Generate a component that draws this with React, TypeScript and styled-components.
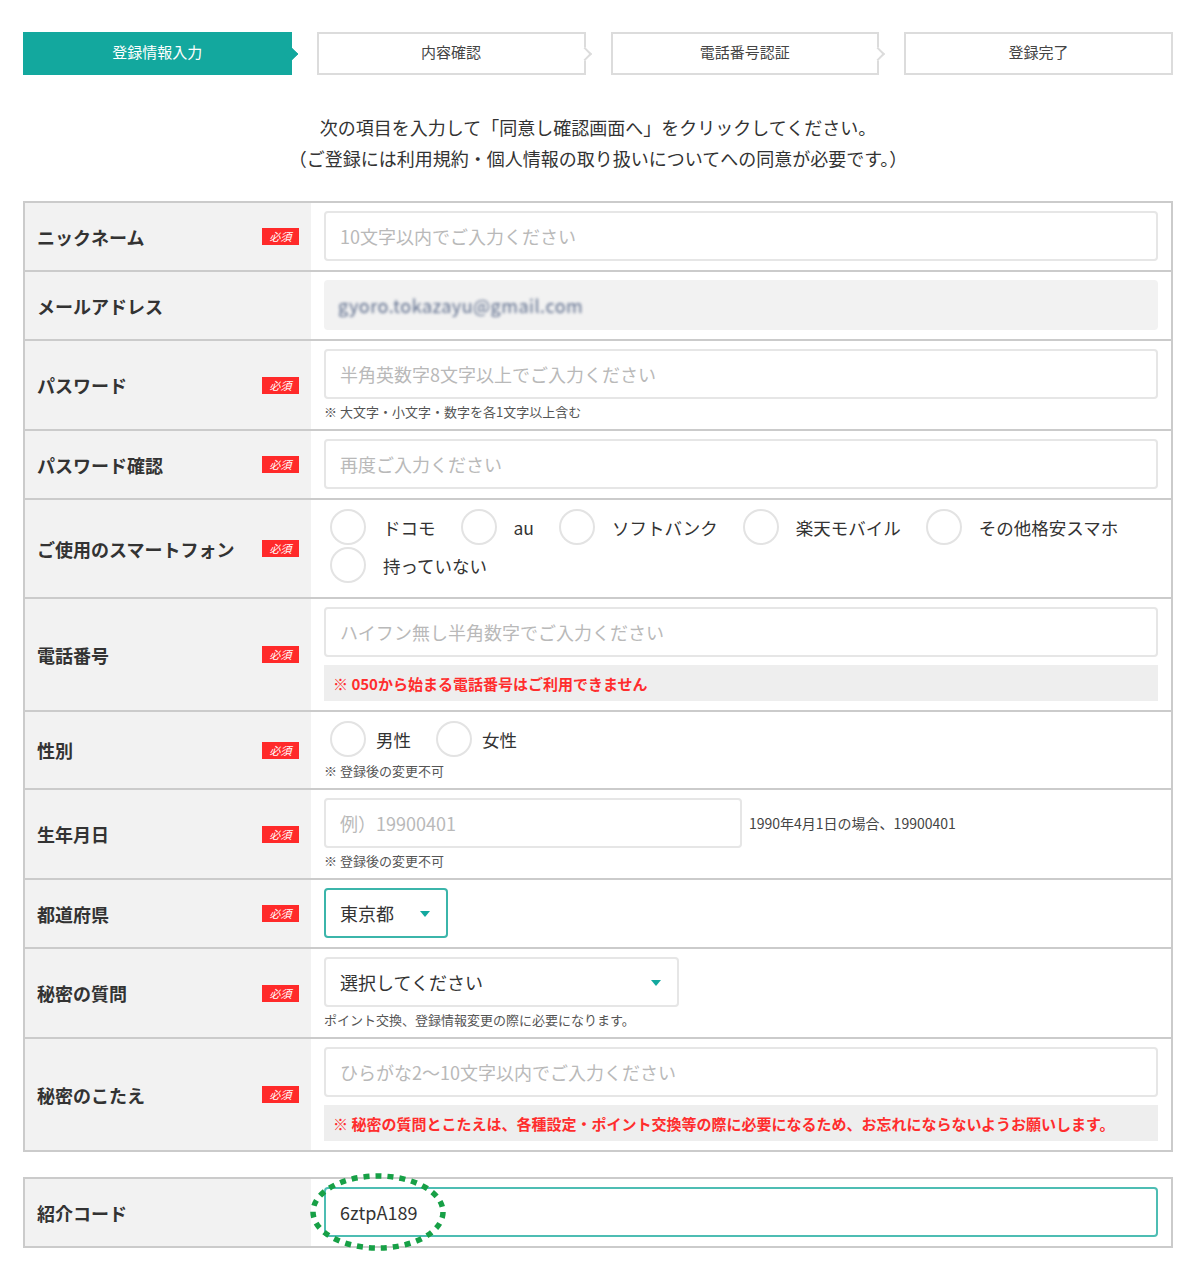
import React from 'react';
import styled, { createGlobalStyle, css } from 'styled-components';

const GlobalStyle = createGlobalStyle`
  html, body {
    margin: 0;
    padding: 0;
    background: #fff;
  }
  body {
    font-family: "Noto Sans CJK JP", "Noto Sans", sans-serif;
    color: #333;
  }
`;

const TEAL = '#13a89e';

type Field =
  | { kind: 'input'; placeholder?: string; note?: string; alert?: string; width?: number; side?: string }
  | { kind: 'email'; value: string }
  | { kind: 'radio'; options: string[][]; gap: number; note?: string }
  | { kind: 'select'; value: string; width: number; active?: boolean; note?: string };

type Row = { label: string; required: boolean; field: Field };

const rows: Row[] = [
  { label: 'ニックネーム', required: true, field: { kind: 'input', placeholder: '10文字以内でご入力ください' } },
  { label: 'メールアドレス', required: false, field: { kind: 'email', value: 'gyoro.tokazayu@gmail.com' } },
  {
    label: 'パスワード',
    required: true,
    field: { kind: 'input', placeholder: '半角英数字8文字以上でご入力ください', note: '※ 大文字・小文字・数字を各1文字以上含む' },
  },
  { label: 'パスワード確認', required: true, field: { kind: 'input', placeholder: '再度ご入力ください' } },
  {
    label: 'ご使用のスマートフォン',
    required: true,
    field: {
      kind: 'radio',
      gap: 17,
      options: [['ドコモ', 'au', 'ソフトバンク', '楽天モバイル', 'その他格安スマホ'], ['持っていない']],
    },
  },
  {
    label: '電話番号',
    required: true,
    field: {
      kind: 'input',
      placeholder: 'ハイフン無し半角数字でご入力ください',
      alert: '※ 050から始まる電話番号はご利用できません',
    },
  },
  { label: '性別', required: true, field: { kind: 'radio', gap: 10, options: [['男性', '女性']], note: '※ 登録後の変更不可' } },
  {
    label: '生年月日',
    required: true,
    field: {
      kind: 'input',
      placeholder: '例）19900401',
      width: 418,
      side: '1990年4月1日の場合、19900401',
      note: '※ 登録後の変更不可',
    },
  },
  { label: '都道府県', required: true, field: { kind: 'select', value: '東京都', width: 124, active: true } },
  {
    label: '秘密の質問',
    required: true,
    field: { kind: 'select', value: '選択してください', width: 355, note: 'ポイント交換、登録情報変更の際に必要になります。' },
  },
  {
    label: '秘密のこたえ',
    required: true,
    field: {
      kind: 'input',
      placeholder: 'ひらがな2〜10文字以内でご入力ください',
      alert: '※ 秘密の質問とこたえは、各種設定・ポイント交換等の際に必要になるため、お忘れにならないようお願いします。',
    },
  },
];

const steps = ['登録情報入力', '内容確認', '電話番号認証', '登録完了'];

const App: React.FC = () => {
  return (
    <>
      <GlobalStyle />
      <Page>
        <Steps>
          {steps.map((s, i) => (
            <Step key={s} active={i === 0} last={i === steps.length - 1}>
              {s}
            </Step>
          ))}
        </Steps>

        <Intro>
          次の項目を入力して「同意し確認画面へ」をクリックしてください。
          <br />
          （ご登録には利用規約・個人情報の取り扱いについてへの同意が必要です。）
        </Intro>

        <Table>
          {rows.map((row) => (
            <FormRow key={row.label}>
              <LabelCell>
                <LabelText>{row.label}</LabelText>
                {row.required && <Badge>必須</Badge>}
              </LabelCell>
              <FieldCell>{renderField(row.field)}</FieldCell>
            </FormRow>
          ))}
        </Table>

        <Table spaced>
          <FormRow>
            <LabelCell>
              <LabelText>紹介コード</LabelText>
            </LabelCell>
            <FieldCell>
              <InputLine>
                <TextBox focused>
                  <ValueText>6ztpA189</ValueText>
                </TextBox>
              </InputLine>
              <Marker width="142" height="84" viewBox="0 0 142 84">
                <ellipse
                  cx="71"
                  cy="42"
                  rx="65"
                  ry="36"
                  fill="none"
                  stroke="#17a046"
                  strokeWidth="5.5"
                  strokeDasharray="6 6"
                />
              </Marker>
            </FieldCell>
          </FormRow>
        </Table>
      </Page>
    </>
  );
};

const renderField = (f: Field) => {
  if (f.kind === 'input') {
    return (
      <>
        <InputLine>
          <TextBox width={f.width}>
            <Placeholder>{f.placeholder}</Placeholder>
          </TextBox>
          {f.side && <SideText>{f.side}</SideText>}
        </InputLine>
        {f.note && <Note>{f.note}</Note>}
        {f.alert && <Alert>{f.alert}</Alert>}
      </>
    );
  }
  if (f.kind === 'email') {
    return (
      <EmailBox>
        <Blurred>{f.value}</Blurred>
      </EmailBox>
    );
  }
  if (f.kind === 'radio') {
    return (
      <>
        <RadioGroup>
          {f.options.map((line, i) => (
            <RadioLine key={i}>
              {line.map((o) => (
                <RadioItem key={o}>
                  <RadioCircle />
                  <RadioText gap={f.gap}>{o}</RadioText>
                </RadioItem>
              ))}
            </RadioLine>
          ))}
        </RadioGroup>
        {f.note && <Note flush>{f.note}</Note>}
      </>
    );
  }
  return (
    <>
      <SelectBox active={f.active} width={f.width}>
        <ValueText>{f.value}</ValueText>
        <Caret />
      </SelectBox>
      {f.note && <Note>{f.note}</Note>}
    </>
  );
};

export default App;

const Page = styled.div`
  width: 1150px;
  padding: 32px 0 40px 23px;
`;

const Steps = styled.div`
  display: grid;
  grid-template-columns: repeat(4, 1fr);
  column-gap: 25px;
`;

const Step = styled.div<{ active?: boolean; last?: boolean }>`
  position: relative;
  height: 43px;
  display: flex;
  align-items: center;
  justify-content: center;
  padding-bottom: 4px;
  font-size: 15px;
  box-sizing: border-box;
  color: ${(p) => (p.active ? '#fff' : '#444')};
  background: ${(p) => (p.active ? TEAL : '#fff')};
  border: 2px solid ${(p) => (p.active ? TEAL : '#dcdcdc')};

  ${(p) =>
    !p.last &&
    css`
      &::after {
        content: '';
        position: absolute;
        top: 50%;
        right: -6px;
        width: 8px;
        height: 8px;
        margin-top: -5px;
        background: ${p.active ? TEAL : '#fff'};
        border-top: 2px solid ${p.active ? TEAL : '#dcdcdc'};
        border-right: 2px solid ${p.active ? TEAL : '#dcdcdc'};
        transform: rotate(45deg);
      }
    `}
`;

const Intro = styled.p`
  margin: 37px 0 27px;
  text-align: center;
  font-size: 18px;
  line-height: 31px;
  color: #333;
`;

const Table = styled.div<{ spaced?: boolean }>`
  border: 2px solid #cbcbcb;
  margin-top: ${(p) => (p.spaced ? '25px' : '0')};
`;

const FormRow = styled.div`
  display: grid;
  grid-template-columns: 286px 1fr;
  & + & {
    border-top: 2px solid #cbcbcb;
  }
`;

const LabelCell = styled.div`
  background: #f2f2f2;
  display: flex;
  align-items: center;
  justify-content: space-between;
  padding: 0 12px 0 12px;
`;

const LabelText = styled.span`
  font-size: 18px;
  font-weight: 700;
  color: #333;
`;

const Badge = styled.span`
  width: 37px;
  height: 17px;
  background: #ff2a2a;
  color: #fff;
  font-size: 11px;
  font-style: italic;
  line-height: 17px;
  text-align: center;
`;

const FieldCell = styled.div`
  position: relative;
  padding: 8px 13px 9px 13px;
  display: flex;
  flex-direction: column;
  justify-content: center;
`;

const InputLine = styled.div`
  display: flex;
  align-items: center;
`;

const TextBox = styled.div<{ focused?: boolean; width?: number }>`
  flex: ${(p) => (p.width ? 'none' : '1')};
  width: ${(p) => (p.width ? `${p.width}px` : 'auto')};
  box-sizing: border-box;
  height: 50px;
  display: flex;
  align-items: center;
  padding: 0 14px;
  background: #fff;
  border: 2px solid ${(p) => (p.focused ? '#4dbdb3' : '#e6e6e6')};
  border-radius: 4px;
  font-size: 18px;
`;

const Placeholder = styled.span`
  color: #b9b9b9;
`;

const ValueText = styled.span`
  color: #333;
  font-size: 18px;
`;

const SideText = styled.span`
  margin-left: 7px;
  font-size: 14px;
  color: #444;
`;

const Note = styled.div<{ flush?: boolean }>`
  margin-top: ${(p) => (p.flush ? '0' : '4px')};
  font-size: 13px;
  line-height: 17px;
  color: #555;
`;

const Alert = styled.div`
  margin-top: 8px;
  height: 36px;
  display: flex;
  align-items: center;
  padding: 0 9px;
  background: #eeeeee;
  color: #ff2d2d;
  font-size: 15px;
  font-weight: 700;
`;

const EmailBox = styled.div`
  height: 50px;
  display: flex;
  align-items: center;
  padding: 0 14px;
  background: #f2f2f2;
  border-radius: 4px;
`;

const Blurred = styled.span`
  font-size: 18px;
  letter-spacing: 0.5px;
  color: #5a6a8a;
  filter: blur(1.4px);
`;

const RadioGroup = styled.div`
  padding-bottom: 4px;
`;

const RadioLine = styled.div`
  display: flex;
  align-items: center;
  height: 38px;
  margin-left: 6px;
`;

const RadioItem = styled.label`
  display: flex;
  align-items: center;
  margin-right: 25px;
`;

const RadioCircle = styled.span`
  width: 32px;
  height: 32px;
  border: 2px solid #e3e3e3;
  border-radius: 50%;
  background: #fff;
`;

const RadioText = styled.span<{ gap: number }>`
  margin-left: ${(p) => p.gap}px;
  font-size: 17.5px;
  color: #333;
`;

const SelectBox = styled.div<{ active?: boolean; width: number }>`
  box-sizing: border-box;
  width: ${(p) => p.width}px;
  height: 50px;
  display: flex;
  align-items: center;
  justify-content: space-between;
  padding: 0 16px 0 14px;
  background: #fff;
  border: 2px solid ${(p) => (p.active ? '#3bb5aa' : '#e6e6e6')};
  border-radius: 4px;
`;

const Caret = styled.span`
  width: 0;
  height: 0;
  border-left: 5px solid transparent;
  border-right: 5px solid transparent;
  border-top: 6px solid ${TEAL};
  margin-top: 2px;
`;

const Marker = styled.svg`
  position: absolute;
  left: -4px;
  top: -9px;
  pointer-events: none;
`;
